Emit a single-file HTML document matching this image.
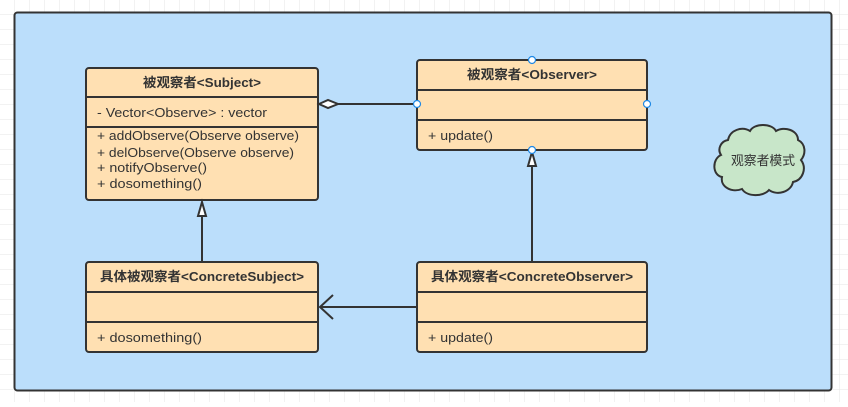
<!DOCTYPE html>
<html><head><meta charset="utf-8"><style>
body{margin:0;width:848px;height:402px;overflow:hidden;background:#fff}
svg text{font-family:"Liberation Sans","Noto Sans CJK SC",sans-serif;fill:#333}
</style></head><body>
<svg width="848" height="402" xmlns="http://www.w3.org/2000/svg">
<defs><pattern id="g" width="15" height="15" patternUnits="userSpaceOnUse"><path d="M15 0V15H0" fill="none" stroke="#e6e6e6" stroke-width="1"/></pattern></defs>
<rect width="848" height="402" fill="url(#g)"/>
<rect x="14.5" y="12.5" width="817" height="378" rx="3" fill="#bbdefb" stroke="#333" stroke-width="2"/>
<g stroke="#333" stroke-width="2" fill="#ffe0b2">
<rect x="86" y="68" width="232" height="132" rx="3"/>
<line x1="86" y1="97" x2="318" y2="97"/><line x1="86" y1="127" x2="318" y2="127"/>
<rect x="417" y="60" width="230" height="90" rx="3"/>
<line x1="417" y1="90" x2="647" y2="90"/><line x1="417" y1="120" x2="647" y2="120"/>
<rect x="86" y="262" width="232" height="90" rx="3"/>
<line x1="86" y1="292" x2="318" y2="292"/><line x1="86" y1="322" x2="318" y2="322"/>
<rect x="417" y="262" width="230" height="90" rx="3"/>
<line x1="417" y1="292" x2="647" y2="292"/><line x1="417" y1="322" x2="647" y2="322"/>
</g>
<g stroke="#333" stroke-width="2" fill="none">
<line x1="338" y1="104" x2="417" y2="104"/>
<path d="M319 104L328 100L338 104L328 108Z" fill="#fff"/>
<line x1="202" y1="262" x2="202" y2="216"/>
<path d="M202 202L206 216H198Z" fill="#fff"/>
<line x1="532" y1="262" x2="532" y2="166"/>
<path d="M532 152L536 166H528Z" fill="#fff"/>
<line x1="320" y1="307" x2="417" y2="307"/>
<path d="M333 295L320 307L333 319"/>
<path d="M728 140c2-10 14-14 22-9c4-8 22-8 26 0c8-5 22-1 22 9c8 4 8 14 3 20c6 8 2 20-8 22c-2 10-16 14-24 8c-6 7-22 7-27-1c-10 4-22-2-20-12c-10-2-10-18-1-22c-4-6 0-14 7-15z" fill="#c8e6c9"/>
</g>
<g fill="#fff" stroke="#1e88e5" stroke-width="1.2">
<circle cx="532" cy="60" r="3.5"/><circle cx="417" cy="104" r="3.5"/><circle cx="647" cy="104" r="3.5"/><circle cx="532" cy="150" r="3.5"/>
</g>
<g font-size="13" font-weight="bold">
<text x="143" y="87" textLength="118" lengthAdjust="spacingAndGlyphs">被观察者&lt;Subject&gt;</text>
<text x="467" y="79" textLength="130" lengthAdjust="spacingAndGlyphs">被观察者&lt;Observer&gt;</text>
<text x="100" y="281" textLength="204" lengthAdjust="spacingAndGlyphs">具体被观察者&lt;ConcreteSubject&gt;</text>
<text x="431" y="281" textLength="202" lengthAdjust="spacingAndGlyphs">具体观察者&lt;ConcreteObserver&gt;</text>
</g>
<g font-size="13">
<text x="97" y="117" textLength="170" lengthAdjust="spacingAndGlyphs">- Vector&lt;Observe&gt; : vector</text>
<text x="97" y="140" textLength="202" lengthAdjust="spacingAndGlyphs">+ addObserve(Observe observe)</text>
<text x="97" y="157" textLength="197" lengthAdjust="spacingAndGlyphs">+ delObserve(Observe observe)</text>
<text x="97" y="172" textLength="110" lengthAdjust="spacingAndGlyphs">+ notifyObserve()</text>
<text x="97" y="188" textLength="105" lengthAdjust="spacingAndGlyphs">+ dosomething()</text>
<text x="428" y="140" textLength="65" lengthAdjust="spacingAndGlyphs">+ update()</text>
<text x="97" y="342" textLength="105" lengthAdjust="spacingAndGlyphs">+ dosomething()</text>
<text x="428" y="342" textLength="65" lengthAdjust="spacingAndGlyphs">+ update()</text>
<text x="731" y="165" textLength="64" lengthAdjust="spacingAndGlyphs">观察者模式</text>
</g>
</svg>
</body></html>
